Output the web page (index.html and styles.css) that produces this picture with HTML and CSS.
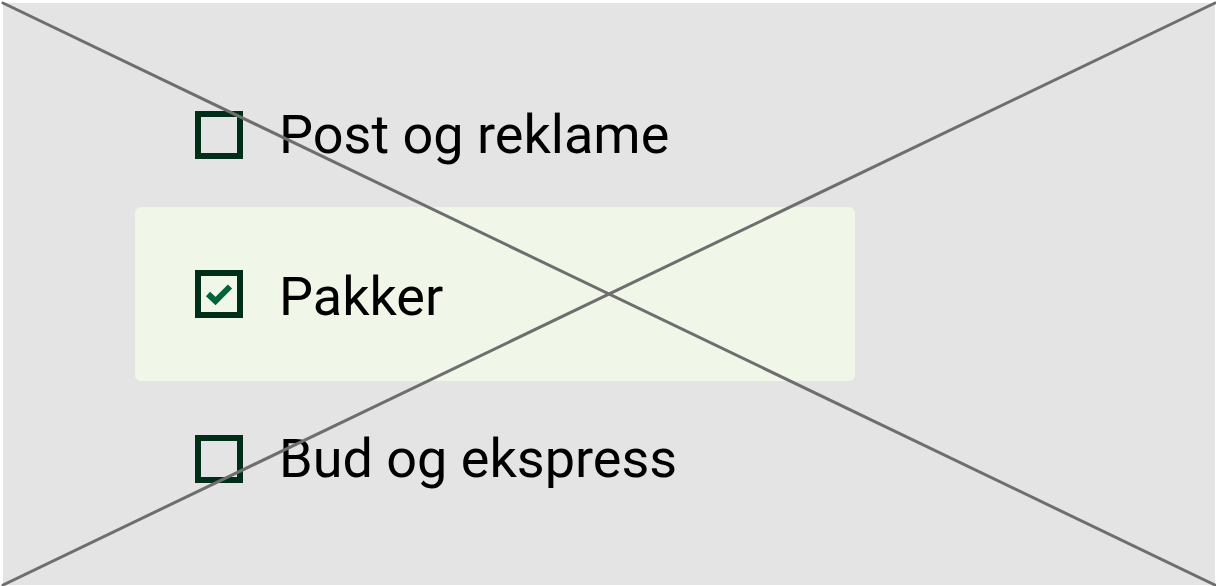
FILE: index.html
```html
<!DOCTYPE html>
<html lang="no">
<head>
<meta charset="utf-8">
<meta name="viewport" content="width=device-width, initial-scale=1">
<title>Post og pakker</title>
<link rel="stylesheet" href="styles.css">
</head>
<body>
<main class="frame">
  <form class="options">
    <label class="option"><input class="box" type="checkbox"><span class="text">Post og reklame</span></label>
    <label class="option option-selected">
      <span class="tick">
        <input class="box" type="checkbox" checked>
        <svg class="check" viewBox="0 0 48 48" aria-hidden="true"><path d="M13 24L20.500 31L35 16.500"/></svg>
      </span>
      <span class="text">Pakker</span>
    </label>
    <label class="option"><input class="box" type="checkbox"><span class="text">Bud og ekspress</span></label>
  </form>
</main>
<svg class="cross" viewBox="0 0 1216 586" preserveAspectRatio="none" aria-hidden="true">
  <path d="M3 3L1215 585M3 585L1215 3"/>
</svg>
</body>
</html>
```
FILE: styles.css
```css
* {
  box-sizing: border-box;
}

body {
  margin: 0;
  min-height: 100vh;
  padding: 3px 1px 1px 3px;
  display: flex;
  position: relative;
  background: #fff;
  color: #000;
  font-family: Roboto, "Liberation Sans", sans-serif;
  font-size: 54px;
  line-height: 60px;
}

.frame {
  flex: 1;
  padding: 60px 132px 24px;
  background: #e4e4e4;
}

.options {
  max-width: 720px;
}

.option {
  display: flex;
  align-items: center;
  gap: 36px;
  min-height: 144px;
  padding: 0 60px;
}

.option:last-child {
  min-height: 156px;
}

.option-selected {
  min-height: 174px;
  border-radius: 6px;
  background: #f0f7e8;
}

.option-selected .text {
  padding-top: 6px;
}

.tick {
  display: grid;
}

.tick > * {
  grid-area: 1 / 1;
}

.box {
  appearance: none;
  flex: none;
  width: 48px;
  height: 48px;
  margin: 0;
  border: 6px solid #002f19;
}

.check {
  width: 48px;
  height: 48px;
  fill: none;
  stroke: #00643a;
  stroke-width: 6;
  pointer-events: none;
}

.cross {
  position: absolute;
  inset: 0;
  width: 100%;
  height: 100%;
  fill: none;
  stroke: #6e6e6e;
  stroke-width: 3;
  stroke-linecap: round;
  pointer-events: none;
}
```
